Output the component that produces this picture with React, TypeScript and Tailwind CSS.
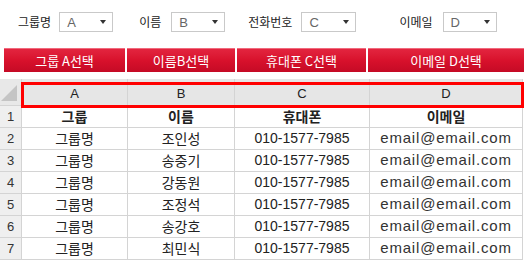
const kr = "font-['Noto_Sans_CJK_KR',sans-serif]";

const rows = [
  ["그룹명", "조인성"],
  ["그룹명", "송중기"],
  ["그룹명", "강동원"],
  ["그룹명", "조정석"],
  ["그룹명", "송강호"],
  ["그룹명", "최민식"],
];

function Select({ value, w }: { value: string; w: string }) {
  return (
    <div
      className={`${w} flex h-[20px] items-center justify-between border border-[#c9c9c9] bg-white pl-[7px] pr-[6px]`}
    >
      <span className="font-['Liberation_Sans',sans-serif] text-[13px] leading-none text-[#666]">{value}</span>
      <span className="h-0 w-0 border-x-[3.5px] border-t-[4px] border-x-transparent border-t-[#333]" />
    </div>
  );
}

function RedButton({ label, w }: { label: string; w: string }) {
  return (
    <button
      className={`${w} h-[24px] border-t border-[#f0697c] bg-gradient-to-b from-[#e3243f] via-[#d8112c] to-[#c50a25] text-[13px] leading-none text-white ${kr}`}
    >
      {label}
    </button>
  );
}

function Cell({ children, className = "" }: { children?: React.ReactNode; className?: string }) {
  return (
    <div className={`flex items-center justify-center border-b border-r border-[#d4d4d4] ${className}`}>
      {children}
    </div>
  );
}

export default function App() {
  return (
    <div className={`h-[265px] w-[528px] overflow-hidden bg-white ${kr}`}>
      <div className="mt-[12px] flex h-[20px] items-center pl-[18px] text-[12px] text-[#222]">
        <span>그룹명</span>
        <div className="ml-[8px]">
          <Select value="A" w="w-[54px]" />
        </div>
        <span className="ml-[26px]">이름</span>
        <div className="ml-[10px]">
          <Select value="B" w="w-[54px]" />
        </div>
        <span className="ml-[23px]">전화번호</span>
        <div className="ml-[9px]">
          <Select value="C" w="w-[55px]" />
        </div>
        <span className="ml-[43px]">이메일</span>
        <div className="ml-[10px]">
          <Select value="D" w="w-[54px]" />
        </div>
      </div>

      <div className="mt-[16px] flex gap-[2px] pl-[4px]">
        <RedButton label="그룹 A선택" w="w-[121px]" />
        <RedButton label="이름B선택" w="w-[108px]" />
        <RedButton label="휴대폰 C선택" w="w-[129px]" />
        <RedButton label="이메일 D선택" w="w-[156px]" />
      </div>

      <div className="relative mt-[7px] w-[523px]">
        <div className="grid grid-cols-[22px_106px_107px_135px_153px] grid-rows-[27px_repeat(7,22px)]">
          <Cell className="relative bg-[#e8e8e8]">
            <span className="absolute bottom-[4px] right-[4px] h-0 w-0 border-b-[16px] border-l-[16px] border-b-[#c4c4c4] border-l-transparent" />
          </Cell>
          {["A", "B", "C", "D"].map((c) => (
            <Cell key={c} className="bg-[#e6e6e6] pt-[4px] font-['Liberation_Sans',sans-serif] text-[13px] text-[#222]">
              {c}
            </Cell>
          ))}

          <Cell className="bg-[#efefef] font-['Liberation_Sans',sans-serif] text-[13px] text-[#333]">1</Cell>
          <Cell className="text-[14px] font-bold text-[#222]">그룹</Cell>
          <Cell className="text-[14px] font-bold text-[#222]">이름</Cell>
          <Cell className="text-[14px] font-bold text-[#222]">휴대폰</Cell>
          <Cell className="text-[14px] font-bold text-[#222]">이메일</Cell>

          {rows.map((r, i) => (
            <div key={i} className="contents">
              <Cell className="bg-[#efefef] font-['Liberation_Sans',sans-serif] text-[13px] text-[#333]">{i + 2}</Cell>
              <Cell className="text-[14px] text-[#222]">{r[0]}</Cell>
              <Cell className="text-[14px] text-[#222]">{r[1]}</Cell>
              <Cell className="font-['Liberation_Sans',sans-serif] text-[14px] text-[#222]">010-1577-7985</Cell>
              <Cell className="font-['Liberation_Sans',sans-serif] text-[15px] tracking-[0.8px] text-[#333]">
                email@email.com
              </Cell>
            </div>
          ))}
        </div>
        <div className="absolute left-[21px] top-[3px] h-[26px] w-[503px] border-[3px] border-[#ff0000]" />
      </div>
    </div>
  );
}
